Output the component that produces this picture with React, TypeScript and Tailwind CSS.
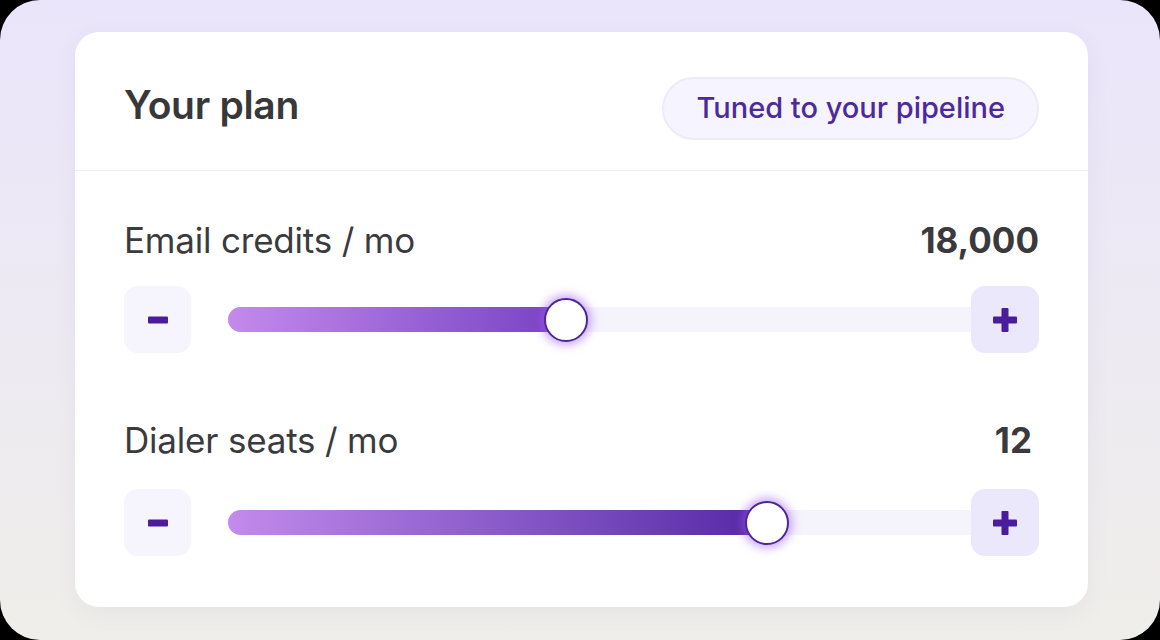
import React from "react";

type Slider = {
  label: string;
  value: string;
  pct: number;
  fill: string;
  valueClass: string;
};

const sliders: Slider[] = [
  {
    label: "Email credits / mo",
    value: "18,000",
    pct: 45.5,
    fill: "bg-gradient-to-r from-[#c48aec] to-[#7841c2]",
    valueClass: "",
  },
  {
    label: "Dialer seats / mo",
    value: "12",
    pct: 72.5,
    fill: "bg-gradient-to-r from-[#c48aec] to-[#5626a6]",
    valueClass: "pr-[7px]",
  },
];

const MinusIcon = () => (
  <svg width="22" height="8" viewBox="0 0 22 8">
    <rect x="1" y="0.5" width="20" height="7" rx="1" fill="#4a1d9c" />
  </svg>
);

const PlusIcon = () => (
  <svg width="26" height="26" viewBox="0 0 26 26">
    <rect x="1" y="9.5" width="24" height="7" rx="1" fill="#4a1d9c" />
    <rect x="9.5" y="1" width="7" height="24" rx="1" fill="#4a1d9c" />
  </svg>
);

const SliderRow: React.FC<{ s: Slider; first: boolean }> = ({ s, first }) => (
  <div className={first ? "" : "mt-[69px]"}>
    <div className="flex items-center justify-between h-9">
      <span className="text-[35px] text-[#3b3b3d] tracking-[-0.2px]">{s.label}</span>
      <span className={`text-[35px] font-bold text-[#3a3a3c] ${s.valueClass}`}>{s.value}</span>
    </div>
    <div className={`flex items-center ${first ? "mt-[28px]" : "mt-[31px]"}`}>
      <button className="w-[67px] h-[67px] rounded-[14px] bg-[#f6f4fd] flex items-center justify-center">
        <MinusIcon />
      </button>
      <div className="relative flex-1 ml-[37px] h-[25px] rounded-l-full bg-[#f5f3fc]">
        <div
          className={`absolute left-0 top-0 h-full rounded-full ${s.fill}`}
          style={{ width: `${s.pct}%` }}
        />
        <div
          className="absolute top-1/2 -translate-x-1/2 -translate-y-1/2 w-[44px] h-[44px] rounded-full bg-white border-2 border-[#4b2896] shadow-[0_0_10px_3px_rgba(160,90,245,0.55)]"
          style={{ left: `${s.pct}%` }}
        />
      </div>
      <button className="w-[68px] h-[67px] rounded-[14px] bg-[#ece8fb] flex items-center justify-center">
        <PlusIcon />
      </button>
    </div>
  </div>
);

export default function App() {
  return (
    <div className="w-[1160px] h-[640px] bg-black font-['Inter','Noto_Sans',sans-serif]">
      <div className="w-full h-full rounded-[40px] bg-gradient-to-b from-[#ebe5fb] to-[#f0eeea] pt-[32px] pl-[75px]">
        <div className="w-[1013px] h-[575px] bg-white rounded-[24px] shadow-[0_6px_24px_rgba(90,70,140,0.06)]">
          <div className="h-[139px] pt-[14px] px-[49px] flex items-center justify-between border-b border-[#f0eef4]">
            <h1 className="text-[39px] font-semibold text-[#38383a] tracking-[-0.3px] -mt-[6px]">Your plan</h1>
            <div className="h-[63px] px-[32px] rounded-full bg-[#f6f4fe] border-2 border-[#eeebf8] flex items-center">
              <span className="text-[29px] font-medium text-[#4c2a9b]">Tuned to your pipeline</span>
            </div>
          </div>
          <div className="px-[49px] pt-[51px]">
            {sliders.map((s, i) => (
              <SliderRow key={s.label} s={s} first={i === 0} />
            ))}
          </div>
        </div>
      </div>
    </div>
  );
}
